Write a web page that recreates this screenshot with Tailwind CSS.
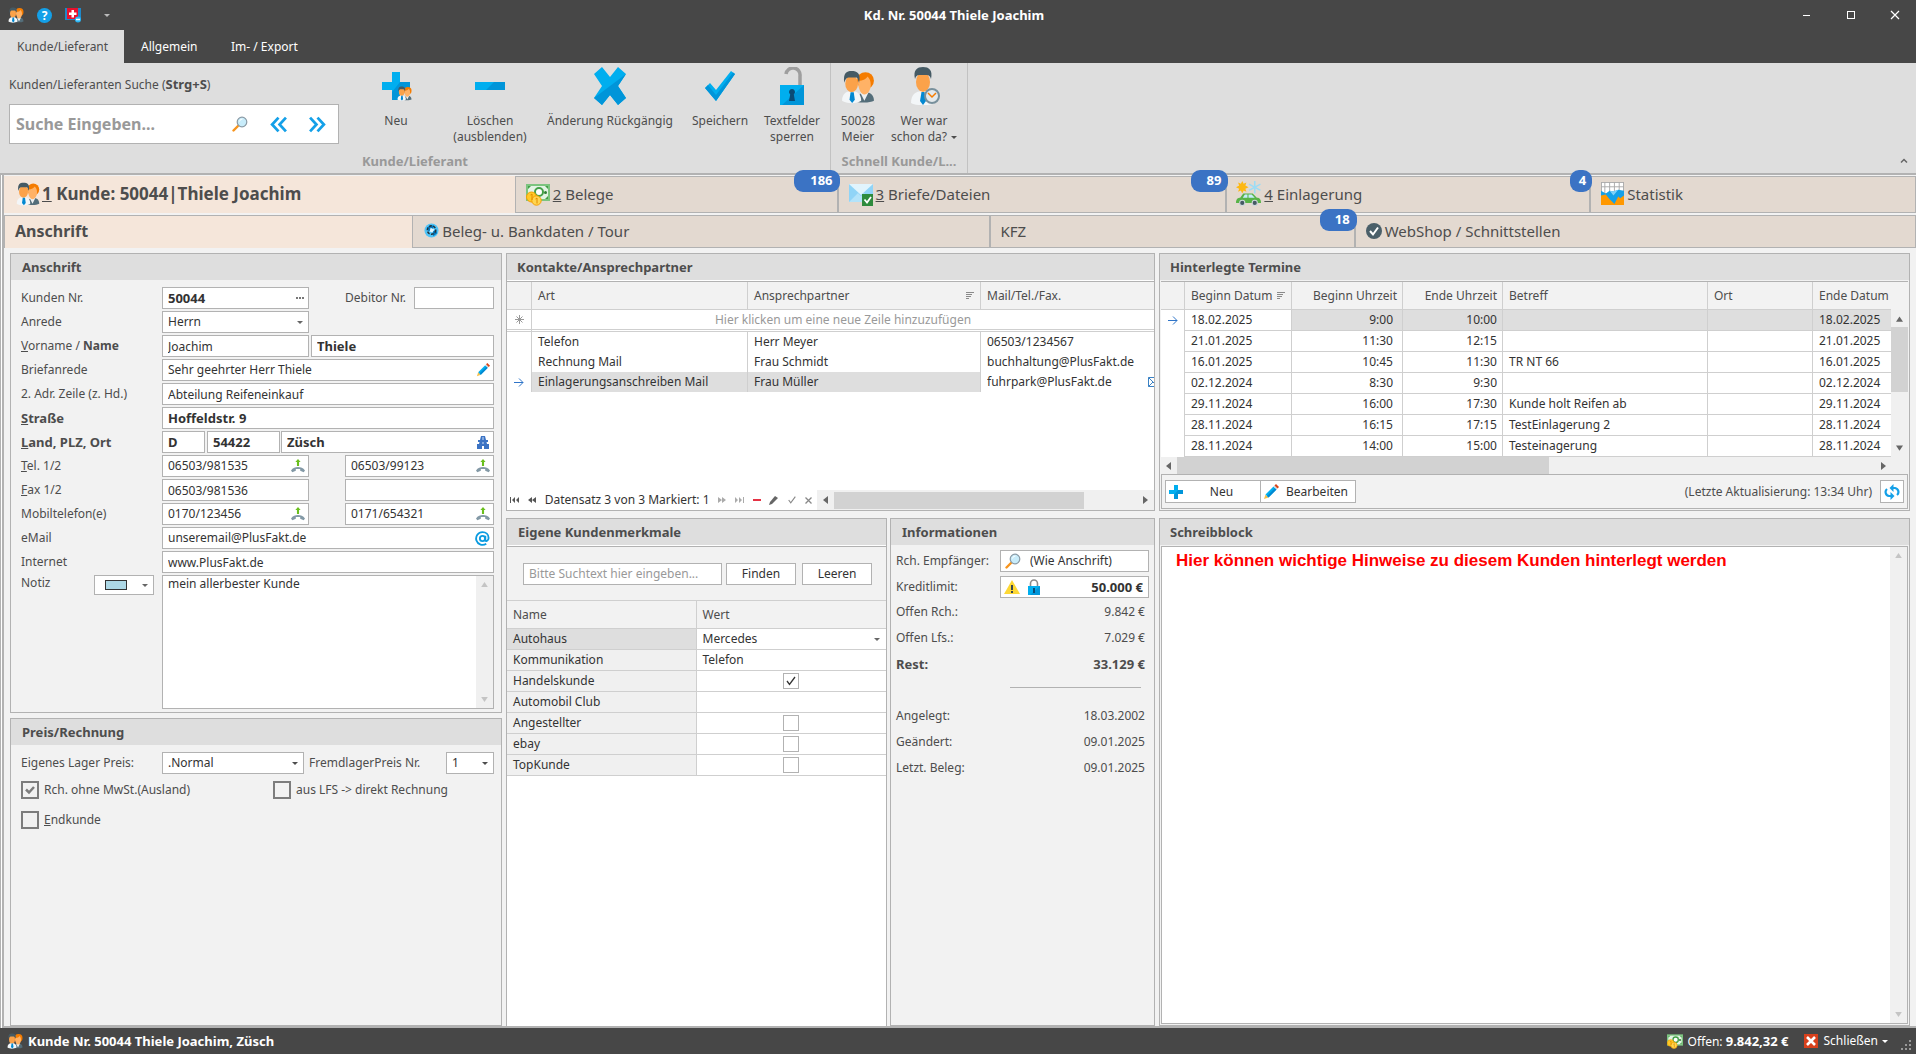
<!doctype html>
<html lang="de">
<head>
    <meta charset="UTF-8">
    <meta name="viewport" content="width=device-width, initial-scale=1.0">
    <title>Kd. Nr. 50044 Thiele Joachim</title>
    <script src="https://cdn.jsdelivr.net/npm/@tailwindcss/browser@4"></script>
</head>
<body class="flex flex-col h-screen overflow-hidden bg-[#f2f2f2] font-['Noto_Sans',sans-serif] text-[12px] leading-[16px] text-[#4d4d4d]">

<!-- shared icons -->
<svg class="hidden">
    <symbol id="i-people" viewBox="0 0 32 32">
        <path d="M15 30c0-5 3-9 8-9s8 3 8 8c-3 2-12 2-16 1z" fill="#546e7a"/>
        <path d="M18 21l4 8 4-8z" fill="#eceff1"/>
        <ellipse cx="23" cy="10" rx="8" ry="8" fill="#f57c00"/>
        <path d="M16 10c5 0 8-2 9-4 2 2 3 4 3 8 0 5-3 9-6 9s-6-5-6-13z" fill="#ffb266"/>
        <path d="M1 29c0-6 3-9 9-9s9 3 9 9c-4 3-14 3-18 0z" fill="#f3f6f8"/>
        <ellipse cx="10" cy="13" rx="6" ry="8" fill="#fba24a"/>
        <path d="M3 12C2 3 5 1 10 1s9 2 7 11c-1-3-1-5-3-5H7c-2 0-3 2-4 5z" fill="#455a64"/>
        <path d="M9 21h3l1 7-2.500 3L8 28z" fill="#0288d1"/>
    </symbol>
    <symbol id="i-plus" viewBox="0 0 28 28">
        <path d="M10 0h8v10h10v8H18v10h-8V18H0v-8h10z" fill="#00aeef"/>
        <path d="M18 10h10v8H18v10h-8v-8z" fill="#0095d9"/>
    </symbol>
    <symbol id="i-lens" viewBox="0 0 16 16">
        <path d="M1.500 14.500l5-5" stroke="#f7941d" stroke-width="2.400" stroke-linecap="round"/>
        <circle cx="10" cy="6" r="4.800" fill="#c8ecfa" stroke="#8a9aa5" stroke-width="1.200"/>
        <path d="M7.500 5.500a3 3 0 0 1 3-2.500" stroke="#fff" fill="none"/>
    </symbol>
    <symbol id="i-pen" viewBox="0 0 16 16">
        <path d="M1 15l1.500-4.500 3 3z" fill="#f5c04a"/>
        <path d="M2.500 10.500L10.500 2.500l3 3-8 8z" fill="#00aeef"/>
        <path d="M4 12l8-8 1.500 1.500-8 8z" fill="#0288d1"/>
        <path d="M10.500 2.500l1-1 3 3-1 1z" fill="#cfd8dc"/>
        <path d="M11.500 1.500L13 0l3 3-1.500 1.500z" fill="#d84315"/>
    </symbol>
    <symbol id="i-phone" viewBox="0 0 16 16">
        <path d="M8 0l3 3.500H9.200V8H6.800V3.500H5z" fill="#6abf1e"/>
        <path d="M0 13c4-5 12-5 16 0l-1.500 2-4-1.500V11.500h-5v2L1.500 15z" fill="#8399a6"/>
    </symbol>
    <symbol id="i-money" viewBox="0 0 24 24">
        <rect x="0" y="2" width="24" height="17" fill="#7cc47f"/>
        <rect x="2" y="4" width="20" height="13" fill="#e3f3e4"/>
        <path d="M2 4h3l-3 3zM22 4h-3l3 3zM22 17h-3l3-3z" fill="#43a047"/>
        <circle cx="13" cy="10" r="4" fill="#fff" stroke="#43a047" stroke-width="2"/>
        <circle cx="19.500" cy="10.500" r="1.500" fill="#2e7d32"/>
        <circle cx="5.500" cy="15" r="5" fill="#ffca28" stroke="#f59f00"/>
        <circle cx="10.500" cy="18.500" r="4.700" fill="#ffd54f" stroke="#f59f00"/>
        <path d="M4.500 13l1.500-1v6M9.500 17l1.500-1v5.500" stroke="#e08a00" fill="none"/>
    </symbol>
    <symbol id="i-caret" viewBox="0 0 6 3"><path d="M0 0h6L3 3z" fill="currentColor"/></symbol>
    <symbol id="i-up" viewBox="0 0 8 6"><path d="M4 0l4 6H0z" fill="currentColor"/></symbol>
    <symbol id="i-down" viewBox="0 0 8 6"><path d="M4 6l4-6H0z" fill="currentColor"/></symbol>
    <symbol id="i-left" viewBox="0 0 5 8"><path d="M5 0v8L0 4z" fill="currentColor"/></symbol>
    <symbol id="i-right" viewBox="0 0 5 8"><path d="M0 0v8l5-4z" fill="currentColor"/></symbol>
    <symbol id="i-row" viewBox="0 0 10 9"><path d="M0 4.500h9M5 .5l4 4-4 4" stroke="#2f74c8" fill="none"/></symbol>
    <symbol id="i-sort" viewBox="0 0 9 8"><path d="M1 .5h8M1 2.500h6M1 4.500h5M1 6.500h3" stroke="#8a8a8a" fill="none"/></symbol>
    <symbol id="i-check" viewBox="0 0 12 12"><path d="M2 6l2.500 3.500L10 2" stroke="currentColor" stroke-width="1.300" fill="none"/></symbol>
</svg>

<header class="shrink-0 bg-[#474747] text-white">
    <div class="flex items-center h-[30px]">
        <div class="flex flex-1 items-center gap-[13px] pl-2">
            <svg class="size-4"><use href="#i-people"/></svg>
            <button type="button" aria-label="Hilfe" class="size-[15px] rounded-full bg-[#14a0e8] text-[12px] leading-[15px] font-bold">?</button>
            <svg class="size-4" viewBox="0 0 16 16"><path d="M0 1h16v12H0z" fill="#1e88c8"/><path d="M2 1h11v11H2z" fill="#e8112d"/><path d="M6.500 3h2.500v2.500h2.500V8H9v2.500H6.500V8H4V5.500h2.500z" fill="#fff"/><circle cx="13" cy="12.500" r="3" fill="#29b6f6"/><path d="M11 12.500h4" stroke="#fff" stroke-width="1.500"/></svg>
            <svg class="ml-[10px] w-[6px] h-[3px] text-[#bbb]"><use href="#i-caret"/></svg>
        </div>
        <h1 class="font-bold text-[13px]">Kd. Nr. 50044 Thiele Joachim</h1>
        <div class="flex flex-1 justify-end gap-[34px] pr-4">
            <button type="button" aria-label="Minimieren"><svg class="size-[10px]" viewBox="0 0 10 10"><path d="M1 5.500h7" stroke="#fff" fill="none"/></svg></button>
            <button type="button" aria-label="Maximieren"><svg class="size-[10px]" viewBox="0 0 10 10"><rect x="1.500" y="1.500" width="7" height="7" stroke="#fff" fill="none"/></svg></button>
            <button type="button" aria-label="Schließen"><svg class="size-[10px]" viewBox="0 0 10 10"><path d="M1 1l8 8M9 1L1 9" stroke="#fff" stroke-width="1.200" fill="none"/></svg></button>
        </div>
    </div>
    <nav class="flex h-[33px] items-stretch">
        <a href="#" class="flex items-center bg-[#dedede] pl-[17px] w-[124px] text-[#4d4d4d]">Kunde/Lieferant</a>
        <a href="#" class="flex items-center pl-[17px] w-[90px]">Allgemein</a>
        <a href="#" class="flex items-center pl-[17px]">Im- / Export</a>
    </nav>
</header>

<section class="flex shrink-0 h-[112px] bg-[#dedede] border-b-2 border-[#b2b2b2]">
    <div class="relative flex w-[831px] border-r border-[#c2c2c2]">
        <div class="w-[346px] pl-[9px] pr-[7px] pt-[13px]">
            <label for="suche">Kunden/Lieferanten Suche (<b class="text-[13px]">Strg+S</b>)</label>
            <div class="flex items-center mt-[11px] h-[40px] border border-[#b2b2b2] bg-white pl-[6px] pr-3 gap-[22px]">
                <input id="suche" type="text" placeholder="Suche Eingeben..." class="min-w-0 flex-1 text-[16px] font-bold outline-none placeholder:text-[#999]">
                <svg class="size-4 shrink-0"><use href="#i-lens"/></svg>
                <button type="button" aria-label="Zurück"><svg class="size-[17px]" viewBox="0 0 16 16"><path d="M8 1.500L2 8l6 6.500M15 1.500L9 8l6 6.500" stroke="#14a0e8" stroke-width="2.600" fill="none"/></svg></button>
                <button type="button" aria-label="Vor"><svg class="size-[17px]" viewBox="0 0 16 16"><path d="M1 1.500L7 8l-6 6.500M8 1.500L14 8l-6 6.500" stroke="#14a0e8" stroke-width="2.600" fill="none"/></svg></button>
            </div>
        </div>
        <button type="button" class="flex flex-col items-center w-[100px] pt-[7px]">
            <svg class="size-8 mb-[11px]" viewBox="0 0 32 32"><use href="#i-plus" x="2" y="2" width="28" height="28"/><use href="#i-people" x="17" y="16" width="15" height="15"/></svg>
            Neu
        </button>
        <button type="button" class="flex flex-col items-center w-[88px] pt-[7px]">
            <svg class="size-8 mb-[11px]" viewBox="0 0 32 32"><path d="M1 12h30v8H1z" fill="#00aeef"/><path d="M20 12h11v8H12z" fill="#0095d9"/></svg>
            Löschen<br>(ausblenden)
        </button>
        <button type="button" class="flex flex-col items-center w-[152px] pt-[7px]">
            <svg class="size-[38px] -mt-[3px] mb-2" viewBox="0 0 38 38"><path d="M3 7l8-7 8 10 8-10 8 7-8 12 8 12-8 7-8-10-8 10-8-7 8-12z" fill="#00aeef"/><path d="M35 7l-8 12 8 12-8 7-8-10-8 10-8-7z" fill="#0095d9"/></svg>
            Änderung Rückgängig
        </button>
        <button type="button" class="flex flex-col items-center w-[68px] pt-[7px]">
            <svg class="size-8 mb-[11px]" viewBox="0 0 32 32"><path d="M1 18l5-5 6 7L27 1l4 3-19 27z" fill="#00aeef"/><path d="M31 4L12 31 1 18l3-3 8 10L29 2.500z" fill="#0095d9"/></svg>
            Speichern
        </button>
        <button type="button" class="flex flex-col items-center w-[76px] pt-[7px]">
            <svg class="size-[38px] -mt-[3px] mb-2" viewBox="0 0 38 38"><path d="M13 7a6.500 6.500 0 0 1 14 2v10" stroke="#9e9e9e" stroke-width="3.500" fill="none"/><path d="M7 18h24v20H7z" fill="#00aeef"/><path d="M31 18v20H9z" fill="#0095d9"/><path d="M19 22a3 3 0 0 1 1.800 5.400L22 34h-6l1.200-6.600A3 3 0 0 1 19 22z" fill="#0b4a75"/></svg>
            Textfelder<br>sperren
        </button>
        <p class="absolute inset-x-0 bottom-1 text-center text-[13px] font-bold text-[#999]">Kunde/Lieferant</p>
    </div>
    <div class="relative flex w-[137px] border-r border-[#c2c2c2]">
        <button type="button" class="flex flex-col items-center w-[54px] pt-[7px]">
            <svg class="size-[34px] mb-[9px]"><use href="#i-people"/></svg>
            50028<br>Meier
        </button>
        <button type="button" class="flex flex-col items-center w-[78px] pt-[7px]">
            <svg class="size-[38px] -mt-[3px] mb-2" viewBox="0 0 38 38"><path d="M6 36c0-8 4-12 12-12s12 4 12 12c-5 3-19 3-24 0z" fill="#f3f6f8"/><ellipse cx="18" cy="15" rx="7" ry="10" fill="#fba24a"/><path d="M10 12C8 3 12 0 18 0s10 3 8 12c-1-3-2-4-4-4h-8c-2 0-3 1-4 4z" fill="#455a64"/><path d="M16.500 25h3l1.500 9-3 4-3-4z" fill="#0288d1"/><circle cx="27" cy="29" r="7" fill="#e3e9ec" stroke="#78909c" stroke-width="2"/><path d="M23 26l4 4 4-4" stroke="#f57c00" stroke-width="1.500" fill="none"/></svg>
            Wer war<span class="flex items-center gap-1">schon da? <svg class="w-[6px] h-[3px]"><use href="#i-caret"/></svg></span>
        </button>
        <p class="absolute inset-x-0 bottom-1 text-center text-[13px] font-bold text-[#999]">Schnell Kunde/L...</p>
    </div>
    <button type="button" aria-label="Menüband minimieren" class="ml-auto mt-auto mb-2 mr-2"><svg class="w-2 h-[7px]" viewBox="0 0 8 7"><path d="M1 4.500L4 1.500l3 3" stroke="#666" stroke-width="1.500" fill="none"/></svg></button>
</section>

<main class="flex flex-1 min-h-0 border-l border-[#b2b2b2] bg-white pl-px">
<div class="flex flex-col flex-1 min-w-0 border-l-2 border-[#b2b2b2] bg-[#f2f2f2] pt-px">

    <nav class="grid shrink-0 grid-cols-[511fr_323fr_389fr_364fr_326fr] h-[37px] text-[15px]">
        <a href="#" class="flex items-center gap-[2px] bg-[#f5e6da] pl-3 pb-[2px] text-[17px] font-bold"><svg class="size-6"><use href="#i-people"/></svg><span><u>1</u> Kunde: 50044|Thiele Joachim</span></a>
        <a href="#" class="relative flex items-center gap-[3px] border border-[#b2b2b2] bg-[#e3d9d0] pl-[10px] pb-[2px]">
            <svg class="size-6"><use href="#i-money"/></svg><span><u>2</u> Belege</span>
            <span class="absolute z-10 -top-[7px] -right-[3px] w-[46px] h-[22px] rounded-[9px] bg-[#3b73c4] pr-[7px] text-right text-[13px] leading-[21px] font-bold text-white">186</span>
        </a>
        <a href="#" class="relative flex items-center gap-[3px] border border-[#b2b2b2] bg-[#e3d9d0] pl-[10px] pb-[2px]">
            <svg class="size-6" viewBox="0 0 24 24"><path d="M0 2h24v18H0z" fill="#90d4f7"/><path d="M0 2l12 11L24 2z" fill="#e1f4fd"/><path d="M0 20l9-9 3 3 3-3 9 9z" fill="#b3e3fa"/><rect x="13" y="12" width="11" height="12" fill="#2e8b3d"/><path d="M15.500 17.500l2.500 3 4-5.500" stroke="#fff" stroke-width="1.800" fill="none"/></svg><span><u>3</u> Briefe/Dateien</span>
            <span class="absolute z-10 -top-[7px] -right-[3px] w-[37px] h-[22px] rounded-[9px] bg-[#3b73c4] pr-[7px] text-right text-[13px] leading-[21px] font-bold text-white">89</span>
        </a>
        <a href="#" class="relative flex items-center gap-[3px] border border-[#b2b2b2] bg-[#e3d9d0] pl-[9px] pb-[2px]">
            <svg class="size-[25px]" viewBox="0 0 24 24"><path d="M6 0l1.300 2.600L10 1.500 9 4.300 12 6 9 7.400l1 2.800-2.700-1L6 12 4.700 9.200 2 10.200l1-2.800L0 6l3-1.700L2 1.500l2.700 1.100z" fill="#fdb813"/><path d="M18 0v12M12.500 3l11 6M23.500 3l-11 6" stroke="#9ddcf5" stroke-width="1.500"/><path d="M0 21c0-4 2-5 4-5l3-4h9l4 4c3 0 4 2 4 5z" fill="#58b347"/><path d="M6.500 16l2-3H11v3zM12 13h3l3 3h-6z" fill="#c5ecfb"/><circle cx="6" cy="21" r="2.500" fill="#455a64" stroke="#cfd8dc"/><circle cx="18" cy="21" r="2.500" fill="#455a64" stroke="#cfd8dc"/></svg><span><u>4</u> Einlagerung</span>
            <span class="absolute z-10 -top-[7px] -right-[3px] w-[22px] h-[22px] rounded-[9px] bg-[#3b73c4] pr-[6px] text-right text-[13px] leading-[21px] font-bold text-white">4</span>
        </a>
        <a href="#" class="flex items-center gap-[3px] border border-[#b2b2b2] bg-[#e3d9d0] pl-[10px] pb-[2px]">
            <svg class="size-[23px]" viewBox="0 0 24 24"><path d="M0 0h24v13H0z" fill="#fff"/><path d="M0 .5h24M0 5h24M4 0v12M9 0v12M14 0v12M19 0v12M23.500 0v12M.5 0v12" stroke="#aaa"/><path d="M0 12h24v12H0z" fill="#ff9800"/><path d="M0 9l5 3 4-3 4 1 5-2 6 1v5l-4 3-2-2-4 8-5-5-4-5-5 1z" fill="#14a0e8"/><path d="M9 9l4 5 5-6-5 2z" fill="#7fd0f7"/></svg><span>Statistik</span>
        </a>
    </nav>

    <nav class="grid shrink-0 grid-cols-[408fr_577fr_365fr_561fr] mt-[2px] h-[33px] text-[15px]">
        <a href="#" class="flex items-center bg-[#f5e6da] border-t border-l border-[#b2b2b2] pl-[10px] pb-[2px] text-[16px] font-bold">Anschrift</a>
        <a href="#" class="flex items-center gap-[3px] border border-[#b2b2b2] bg-[#e3d9d0] pl-[11px] pb-[2px]">
            <svg class="size-[15px]" viewBox="0 0 16 16"><circle cx="8" cy="8" r="7.500" fill="#4fc3f7"/><path d="M3 5l4-3 4 1-2 4-4 2zM9 9l4-2 1 4-4 3z" fill="#0277bd"/><circle cx="8" cy="7.500" r="4.500" stroke="#263238" stroke-width="1.500" fill="none" stroke-dasharray="3 1.500"/><path d="M7 5l4 2-2 3-3-1z" fill="#e1f5fe"/></svg>
            Beleg- u. Bankdaten / Tour
        </a>
        <a href="#" class="relative flex items-center border border-[#b2b2b2] bg-[#e3d9d0] pl-[10px] pb-[2px]">KFZ
            <span class="absolute z-10 -top-[7px] -right-[3px] w-[37px] h-[22px] rounded-[9px] bg-[#3b73c4] pr-[7px] text-right text-[13px] leading-[21px] font-bold text-white">18</span>
        </a>
        <a href="#" class="flex items-center gap-[3px] border border-[#b2b2b2] bg-[#e3d9d0] pl-[10px] pb-[2px]">
            <svg class="size-4" viewBox="0 0 16 16"><circle cx="8" cy="8" r="8" fill="#4a5f69"/><path d="M4 8l3 3.500L12 4.500" stroke="#fff" stroke-width="2" fill="none"/></svg>
            WebShop / Schnittstellen
        </a>
    </nav>

    <div class="grid flex-1 min-h-0 grid-cols-[492px_649px_1fr] gap-x-1 pl-[6px] pr-[6px] pt-[5px] border-b-2 border-[#b2b2b2]">

        <!-- left column -->
        <div class="flex flex-col gap-[5px] min-h-0">
            <section class="border border-[#b2b2b2]">
                <h2 class="flex items-center h-[26px] bg-[#dedede] pl-[11px] text-[13px] font-bold">Anschrift</h2>
                <form class="flex flex-col gap-[2px] pl-[10px] pr-[7px] pt-[7px] pb-[3px] text-[#333]">
                    <div class="flex h-[22px] items-center">
                        <label for="kdnr" class="w-[141px] text-[#4d4d4d]">Kunden Nr.</label>
                        <div class="flex items-center h-full w-[147px] border border-[#b2b2b2] bg-white pl-[5px] pr-1">
                            <input id="kdnr" value="50044" class="min-w-0 flex-1 text-[13px] font-bold outline-none">
                            <svg class="w-[8px] h-[2px]" viewBox="0 0 8 2"><path d="M0 0h2v2H0zM3 0h2v2H3zM6 0h2v2H6z" fill="#777"/></svg>
                        </div>
                        <label for="debnr" class="ml-[36px] text-[#4d4d4d]">Debitor Nr.</label>
                        <input id="debnr" class="ml-auto h-full w-[80px] border border-[#b2b2b2] bg-white px-[5px]">
                    </div>
                    <div class="flex h-[22px] items-center">
                        <label for="anrede" class="w-[141px] text-[#4d4d4d]">Anrede</label>
                        <div class="relative h-full w-[147px]">
                            <select id="anrede" class="size-full appearance-none border border-[#b2b2b2] bg-white pl-[5px]"><option>Herrn</option></select>
                            <svg class="absolute right-[6px] top-[10px] w-[6px] h-[3px] text-[#666]"><use href="#i-caret"/></svg>
                        </div>
                    </div>
                    <div class="flex h-[22px] items-center">
                        <label for="vorname" class="w-[141px] text-[#4d4d4d]"><u>V</u>orname / <b>Name</b></label>
                        <input id="vorname" value="Joachim" class="h-full w-[147px] border border-[#b2b2b2] bg-white px-[5px]">
                        <input aria-label="Name" value="Thiele" class="ml-[2px] h-full min-w-0 flex-1 border border-[#b2b2b2] bg-white px-[5px] text-[13px] font-bold">
                    </div>
                    <div class="flex h-[22px] items-center">
                        <label for="brief" class="w-[141px] text-[#4d4d4d]">Briefanrede</label>
                        <div class="flex flex-1 items-center h-full border border-[#b2b2b2] bg-white pl-[5px] pr-[3px]">
                            <input id="brief" value="Sehr geehrter Herr Thiele" class="min-w-0 flex-1 outline-none">
                            <svg class="size-[14px]"><use href="#i-pen"/></svg>
                        </div>
                    </div>
                    <div class="flex h-[22px] items-center">
                        <label for="adr2" class="w-[141px] text-[#4d4d4d]">2. Adr. Zeile (z. Hd.)</label>
                        <input id="adr2" value="Abteilung Reifeneinkauf" class="h-full min-w-0 flex-1 border border-[#b2b2b2] bg-white px-[5px]">
                    </div>
                    <div class="flex h-[22px] items-center">
                        <label for="str" class="w-[141px] text-[13px] font-bold text-[#4d4d4d]"><u>S</u>traße</label>
                        <input id="str" value="Hoffeldstr. 9" class="h-full min-w-0 flex-1 border border-[#b2b2b2] bg-white px-[5px] text-[13px] font-bold">
                    </div>
                    <div class="flex h-[22px] items-center">
                        <label for="land" class="w-[141px] text-[13px] font-bold text-[#4d4d4d]"><u>L</u>and, PLZ, Ort</label>
                        <input id="land" value="D" class="h-full w-[43px] border border-[#b2b2b2] bg-white px-[5px] text-[13px] font-bold">
                        <input aria-label="PLZ" value="54422" class="ml-[2px] h-full w-[73px] border border-[#b2b2b2] bg-white px-[5px] text-[13px] font-bold">
                        <div class="flex flex-1 items-center ml-px h-full border border-[#b2b2b2] bg-white pl-[5px] pr-1">
                            <input aria-label="Ort" value="Züsch" class="min-w-0 flex-1 text-[13px] font-bold outline-none">
                            <svg class="w-3 h-[13px]" viewBox="0 0 12 13"><path d="M4 0h4l1 4h2v2H9.500l.5 2h2l0 5H7v-3H5v3H0V8h2l.5-2H1V4h2z" fill="#3b73c4"/><path d="M6 1v3M6 6v2" stroke="#cfe0f7"/></svg>
                        </div>
                    </div>
                    <div class="flex h-[22px] items-center">
                        <label for="tel1" class="w-[141px] text-[#4d4d4d]"><u>T</u>el. 1/2</label>
                        <div class="flex items-center h-full w-[147px] border border-[#b2b2b2] bg-white pl-[5px] pr-[3px]">
                            <input id="tel1" value="06503/981535" class="min-w-0 flex-1 outline-none">
                            <svg class="size-[14px]"><use href="#i-phone"/></svg>
                        </div>
                        <div class="flex items-center ml-auto h-full w-[149px] border border-[#b2b2b2] bg-white pl-[5px] pr-[3px]">
                            <input aria-label="Telefon 2" value="06503/99123" class="min-w-0 flex-1 outline-none">
                            <svg class="size-[14px]"><use href="#i-phone"/></svg>
                        </div>
                    </div>
                    <div class="flex h-[22px] items-center">
                        <label for="fax1" class="w-[141px] text-[#4d4d4d]"><u>F</u>ax 1/2</label>
                        <input id="fax1" value="06503/981536" class="h-full w-[147px] border border-[#b2b2b2] bg-white px-[5px]">
                        <input aria-label="Fax 2" class="ml-auto h-full w-[149px] border border-[#b2b2b2] bg-white px-[5px]">
                    </div>
                    <div class="flex h-[22px] items-center">
                        <label for="mob1" class="w-[141px] text-[#4d4d4d]">Mobiltelefon(e)</label>
                        <div class="flex items-center h-full w-[147px] border border-[#b2b2b2] bg-white pl-[5px] pr-[3px]">
                            <input id="mob1" value="0170/123456" class="min-w-0 flex-1 outline-none">
                            <svg class="size-[14px]"><use href="#i-phone"/></svg>
                        </div>
                        <div class="flex items-center ml-auto h-full w-[149px] border border-[#b2b2b2] bg-white pl-[5px] pr-[3px]">
                            <input aria-label="Mobiltelefon 2" value="0171/654321" class="min-w-0 flex-1 outline-none">
                            <svg class="size-[14px]"><use href="#i-phone"/></svg>
                        </div>
                    </div>
                    <div class="flex h-[22px] items-center">
                        <label for="mail" class="w-[141px] text-[#4d4d4d]">eMail</label>
                        <div class="flex flex-1 items-center h-full border border-[#b2b2b2] bg-white pl-[5px] pr-[3px]">
                            <input id="mail" value="unseremail@PlusFakt.de" class="min-w-0 flex-1 outline-none">
                            <svg class="size-[15px]" viewBox="0 0 16 16"><circle cx="8" cy="8" r="2.800" stroke="#0b9be0" stroke-width="2" fill="none"/><path d="M11 5v4.500c0 2 3.500 1.500 3.500-2C14.500 3.500 11.500 1.200 8 1.200A6.800 6.800 0 1 0 12 13.500" stroke="#0b9be0" stroke-width="2" fill="none"/></svg>
                        </div>
                    </div>
                    <div class="flex h-[22px] items-center">
                        <label for="www" class="w-[141px] text-[#4d4d4d]">Internet</label>
                        <input id="www" value="www.PlusFakt.de" class="h-full min-w-0 flex-1 border border-[#b2b2b2] bg-white px-[5px]">
                    </div>
                    <div class="flex">
                        <label for="notiz" class="w-[73px] text-[#4d4d4d]">Notiz</label>
                        <button type="button" aria-label="Farbe" class="flex items-center justify-between w-[60px] h-5 mr-2 border border-[#b2b2b2] bg-white pl-[10px] pr-[5px]">
                            <span class="w-[22px] h-[10px] border border-[#333] bg-[#add8e6]"></span>
                            <svg class="w-[6px] h-[3px] text-[#666]"><use href="#i-caret"/></svg>
                        </button>
                        <div class="flex flex-1 h-[134px] border border-[#b2b2b2] bg-white">
                            <textarea id="notiz" class="min-w-0 flex-1 resize-none pl-[5px] outline-none">mein allerbester Kunde</textarea>
                            <div class="flex flex-col items-center justify-between w-[17px] bg-[#f0f0f0] py-[6px] text-[#c4c4c4]"><svg class="w-[7px] h-[5px]"><use href="#i-up"/></svg><svg class="w-[7px] h-[5px]"><use href="#i-down"/></svg></div>
                        </div>
                    </div>
                </form>
            </section>

            <section class="flex-1 border border-[#b2b2b2]">
                <h2 class="flex items-center h-[26px] bg-[#dedede] pl-[11px] text-[13px] font-bold">Preis/Rechnung</h2>
                <div class="pl-[10px] pr-[7px] pt-[7px]">
                    <div class="flex h-[22px] items-center">
                        <label for="preis" class="w-[141px]">Eigenes Lager Preis:</label>
                        <div class="relative h-full w-[142px]">
                            <select id="preis" class="size-full appearance-none border border-[#b2b2b2] bg-white pl-[5px] text-[#333]"><option>.Normal</option></select>
                            <svg class="absolute right-[6px] top-[10px] w-[6px] h-[3px]"><use href="#i-caret"/></svg>
                        </div>
                        <label for="fremd" class="ml-[5px]">FremdlagerPreis Nr.</label>
                        <div class="relative ml-auto h-full w-[48px]">
                            <select id="fremd" class="size-full appearance-none border border-[#b2b2b2] bg-white pl-[5px] text-[#333]"><option>1</option></select>
                            <svg class="absolute right-[6px] top-[10px] w-[6px] h-[3px]"><use href="#i-caret"/></svg>
                        </div>
                    </div>
                    <div class="grid grid-cols-[252px_1fr] gap-y-3 mt-[7px]">
                        <label class="relative flex items-center gap-[5px]"><input type="checkbox" checked class="size-[18px] appearance-none border-2 border-[#7d7d7d]"><svg class="absolute left-1 size-[10px]" viewBox="0 0 10 10"><path d="M1 4.500l3 3L9 2" stroke="#7d7d7d" stroke-width="2.500" fill="none"/></svg>Rch. ohne MwSt.(Ausland)</label>
                        <label class="flex items-center gap-[5px]"><input type="checkbox" class="size-[18px] appearance-none border-2 border-[#7d7d7d]">aus LFS -&gt; direkt Rechnung</label>
                        <label class="flex items-center gap-[5px]"><input type="checkbox" class="size-[18px] appearance-none border-2 border-[#7d7d7d]"><span><u>E</u>ndkunde</span></label>
                    </div>
                </div>
            </section>
        </div>

        <!-- middle column -->
        <div class="flex flex-col gap-[7px] min-h-0">
            <section class="flex flex-col h-[258px] border border-[#b2b2b2] bg-white overflow-hidden">
                <h2 class="flex shrink-0 items-center h-[26px] bg-[#dedede] pl-[10px] text-[13px] font-bold">Kontakte/Ansprechpartner</h2>
                <table class="w-full mt-px table-fixed border-separate border-spacing-0 border-t border-[#b2b2b2] text-left text-[#333]">
                    <colgroup><col class="w-[25px]"><col class="w-[216px]"><col class="w-[233px]"><col></colgroup>
                    <thead class="bg-[#f2f2f2] text-[#4d4d4d]">
                        <tr class="h-[28px]">
                            <th class="border-r border-b border-[#cfcfcf]"></th>
                            <th class="border-r border-b border-[#cfcfcf] pl-[6px] font-normal">Art</th>
                            <th class="border-r border-b border-[#cfcfcf] px-[6px] font-normal"><span class="flex items-center justify-between">Ansprechpartner <svg class="w-[9px] h-2"><use href="#i-sort"/></svg></span></th>
                            <th class="border-b border-[#cfcfcf] pl-[6px] font-normal">Mail/Tel./Fax.</th>
                        </tr>
                        <tr class="h-[22px] bg-white text-[#999]">
                            <th class="border-r border-b-3 border-double border-[#cfcfcf]"><svg class="mx-auto size-[9px]" viewBox="0 0 9 9"><path d="M4.500 0v9M0 4.500h9M1.500 1.500l6 6M7.500 1.500l-6 6" stroke="#999"/></svg></th>
                            <th colspan="3" class="border-b-3 border-double border-[#cfcfcf] text-center font-normal">Hier klicken um eine neue Zeile hinzuzufügen</th>
                        </tr>
                    </thead>
                    <tbody id="kontakte"></tbody>
                </table>
                <div class="flex shrink-0 items-center mt-auto h-[20px] pl-[3px]">
                    <div class="flex flex-1 items-center justify-between pr-[5px] text-[#555]">
                        <svg class="w-[10px] h-[6px]" viewBox="0 0 10 6"><path d="M0 0h1v6H0zM5 0v6L2 3zM9 0v6L6 3z" fill="#555"/></svg>
                        <svg class="w-[8px] h-[6px]" viewBox="0 0 8 6"><path d="M4 0v6L0 3zM8 0v6L4 3z" fill="#555"/></svg>
                        <span class="text-[#333]">Datensatz 3 von 3 Markiert: 1</span>
                        <svg class="w-[8px] h-[6px]" viewBox="0 0 8 6"><path d="M0 0v6l4-3zM4 0v6l4-3z" fill="#aaa"/></svg>
                        <svg class="w-[10px] h-[6px]" viewBox="0 0 10 6"><path d="M1 0v6l3-3zM5 0v6l3-3zM9 0h1v6H9z" fill="#aaa"/></svg>
                        <svg class="w-2 h-[2px]" viewBox="0 0 8 2"><path d="M0 0h8v2H0z" fill="#e53244"/></svg>
                        <svg class="size-[9px]" viewBox="0 0 9 9"><path d="M0 9l1-3 5-6 3 2-6 6z" fill="#666"/></svg>
                        <svg class="size-[10px] text-[#888]"><use href="#i-check"/></svg>
                        <svg class="size-[7px]" viewBox="0 0 7 7"><path d="M.5.5l6 6M6.500.5l-6 6" stroke="#888" stroke-width="1.300"/></svg>
                    </div>
                    <div class="flex items-center w-[337px] h-full bg-[#f0f0f0] px-[6px] text-[#666]">
                        <svg class="w-[5px] h-2"><use href="#i-left"/></svg>
                        <div class="ml-[6px] mr-auto w-[250px] h-[17px] bg-[#d2d2d2]"></div>
                        <svg class="w-[5px] h-2"><use href="#i-right"/></svg>
                    </div>
                </div>
            </section>

            <div class="grid flex-1 min-h-0 grid-cols-[381px_1fr] gap-[3px]">
                <section class="border border-b-0 border-[#b2b2b2] bg-white">
                    <h2 class="flex items-center h-[26px] bg-[#dedede] pl-[11px] text-[13px] font-bold">Eigene Kundenmerkmale</h2>
                    <div class="flex h-[54px] items-center mt-px border-t border-[#b2b2b2] bg-[#f2f2f2] pl-4 pr-[14px] text-[#333]">
                        <input type="text" aria-label="Merkmal suchen" placeholder="Bitte Suchtext hier eingeben..." class="h-[22px] min-w-0 flex-1 border border-[#b2b2b2] bg-white px-[5px] placeholder:text-[#999]">
                        <button type="button" class="ml-1 h-[22px] w-[70px] border border-[#b2b2b2] bg-white">Finden</button>
                        <button type="button" class="ml-[6px] h-[22px] w-[70px] border border-[#b2b2b2] bg-white">Leeren</button>
                    </div>
                    <table class="w-full table-fixed border-separate border-spacing-0 text-left text-[#333]">
                        <thead class="bg-[#f2f2f2] text-[#4d4d4d]">
                            <tr class="h-[29px]">
                                <th class="border-y border-r border-[#cfcfcf] pl-[6px] font-normal">Name</th>
                                <th class="border-y border-[#cfcfcf] pl-[6px] font-normal">Wert</th>
                            </tr>
                        </thead>
                        <tbody id="merkmale"></tbody>
                    </table>
                </section>

                <section class="border border-[#b2b2b2]">
                    <h2 class="flex items-center h-[26px] bg-[#dedede] pl-[11px] text-[13px] font-bold">Informationen</h2>
                    <div class="pl-[5px] pr-[5px] pt-[3px]">
                        <div class="flex h-[26px] items-center justify-between">
                            <label for="rch">Rch. Empfänger:</label>
                            <div class="flex items-center gap-[9px] w-[149px] h-[22px] border border-[#b2b2b2] bg-white pl-1">
                                <svg class="size-4 shrink-0"><use href="#i-lens"/></svg>
                                <input id="rch" value="(Wie Anschrift)" class="min-w-0 flex-1 text-[#333] outline-none">
                            </div>
                        </div>
                        <div class="flex h-[26px] items-center justify-between">
                            <label for="kredit">Kreditlimit:</label>
                            <div class="flex items-center gap-2 w-[149px] h-[22px] border border-[#b2b2b2] bg-white pl-[3px] pr-[5px]">
                                <svg class="size-4 shrink-0" viewBox="0 0 16 16"><path d="M8 1l8 14H0z" fill="#fdd835"/><path d="M7 6h2v5H7zM7 12h2v2H7z" fill="#37474f"/></svg>
                                <svg class="w-3 h-4 shrink-0" viewBox="0 0 12 16"><path d="M2.500 8V4.500a3.500 3.500 0 0 1 7 0V8" stroke="#8a8a8a" stroke-width="1.600" fill="none"/><path d="M0 7h12v9H0z" fill="#00aeef"/><path d="M12 7v9H2z" fill="#0095d9"/><path d="M5 9h2v5H5z" fill="#0b4a75"/></svg>
                                <input id="kredit" value="50.000 €" class="min-w-0 flex-1 text-right text-[13px] font-bold text-[#333] outline-none">
                            </div>
                        </div>
                        <dl class="grid grid-cols-2 auto-rows-[26px] pr-[4px] leading-[24px]">
                            <dt>Offen Rch.:</dt><dd class="text-right">9.842 €</dd>
                            <dt>Offen Lfs.:</dt><dd class="text-right">7.029 €</dd>
                            <dt class="text-[13px] font-bold">Rest:</dt><dd class="text-right text-[13px] font-bold">33.129 €</dd>
                        </dl>
                        <hr class="mt-[9px] mb-4 ml-auto mr-2 w-[131px] border-[#b2b2b2]">
                        <dl class="grid grid-cols-2 auto-rows-[26px] pr-[4px] leading-[24px]">
                            <dt>Angelegt:</dt><dd class="text-right">18.03.2002</dd>
                            <dt>Geändert:</dt><dd class="text-right">09.01.2025</dd>
                            <dt>Letzt. Beleg:</dt><dd class="text-right">09.01.2025</dd>
                        </dl>
                    </div>
                </section>
            </div>
        </div>

        <!-- right column -->
        <div class="flex flex-col gap-[7px] min-w-0 min-h-0">
            <section class="flex flex-col h-[258px] border border-[#b2b2b2]">
                <h2 class="flex shrink-0 items-center h-[26px] bg-[#dedede] pl-[10px] text-[13px] font-bold">Hinterlegte Termine</h2>
                <div class="flex border-t border-[#b2b2b2] mx-px mt-px">
                    <table class="flex-1 table-fixed w-px border-separate border-spacing-0 text-left text-[#333]">
                        <colgroup><col class="w-[24px]"><col class="w-[107px]"><col class="w-[111px]"><col class="w-[100px]"><col class="w-[205px]"><col class="w-[105px]"><col></colgroup>
                        <thead class="text-[#4d4d4d]">
                            <tr class="h-[28px] whitespace-nowrap">
                                <th class="border-r border-b border-[#cfcfcf]"></th>
                                <th class="border-r border-b border-[#cfcfcf] px-[6px] font-normal"><span class="flex items-center justify-between">Beginn Datum <svg class="w-[9px] h-2"><use href="#i-sort"/></svg></span></th>
                                <th class="border-r border-b border-[#cfcfcf] pr-[5px] text-right font-normal">Beginn Uhrzeit</th>
                                <th class="border-r border-b border-[#cfcfcf] pr-[5px] text-right font-normal">Ende Uhrzeit</th>
                                <th class="border-r border-b border-[#cfcfcf] pl-[6px] font-normal">Betreff</th>
                                <th class="border-r border-b border-[#cfcfcf] pl-[6px] font-normal">Ort</th>
                                <th class="border-b border-[#cfcfcf] pl-[6px] font-normal">Ende Datum</th>
                            </tr>
                        </thead>
                        <tbody id="termine"></tbody>
                    </table>
                    <div class="flex flex-col w-[17px] pt-[28px]">
                        <div class="flex flex-1 flex-col items-center bg-[#f0f0f0] py-[6px] text-[#666]">
                            <svg class="w-[7px] h-[6px]"><use href="#i-up"/></svg>
                            <div class="mt-[5px] mb-auto w-full h-[65px] bg-[#d2d2d2]"></div>
                            <svg class="w-[7px] h-[6px]"><use href="#i-down"/></svg>
                        </div>
                    </div>
                </div>
                <div class="flex items-center h-[17px] mx-px bg-[#f0f0f0] pl-[5px] pr-[22px] text-[#666]">
                    <svg class="w-[5px] h-2"><use href="#i-left"/></svg>
                    <div class="ml-[6px] mr-auto w-[372px] h-full bg-[#d2d2d2]"></div>
                    <svg class="w-[5px] h-2"><use href="#i-right"/></svg>
                </div>
                <div class="flex flex-1 items-center mx-px mb-px border border-[#b2b2b2] px-[3px] text-[#333]">
                    <button type="button" class="flex items-center w-[96px] h-[23px] border border-[#b2b2b2] bg-white pl-[3px]"><svg class="size-[14px]"><use href="#i-plus"/></svg><span class="flex-1 text-center">Neu</span></button>
                    <button type="button" class="flex items-center w-[96px] h-[23px] -ml-px border border-[#b2b2b2] bg-white pl-[2px]"><svg class="size-4"><use href="#i-pen"/></svg><span class="flex-1 text-center">Bearbeiten</span></button>
                    <span class="ml-auto mr-2 text-[#4d4d4d]">(Letzte Aktualisierung: 13:34 Uhr)</span>
                    <button type="button" aria-label="Aktualisieren" class="flex items-center justify-center w-6 h-[23px] border border-[#b2b2b2] bg-white"><svg class="size-4" viewBox="0 0 16 16"><path d="M7 12H5a4 4 0 0 1-2-7M9 4h2a4 4 0 0 1 2 7" stroke="#14a0e8" stroke-width="2.200" fill="none"/><path d="M9.500 0v8L5.500 4zM6.500 8v8l4-4z" fill="#14a0e8"/></svg></button>
                </div>
            </section>

            <section class="flex flex-col flex-1 min-h-0 border border-[#b2b2b2] pb-px">
                <h2 class="flex shrink-0 items-center h-[26px] bg-[#dedede] pl-[10px] text-[13px] font-bold"><label for="block">Schreibblock</label></h2>
                <div class="flex flex-1 min-h-0 mx-px mt-px border border-[#b2b2b2] bg-white">
                    <textarea id="block" class="min-w-0 flex-1 resize-none pl-[14px] pt-1 font-['Liberation_Sans',sans-serif] text-[17px] leading-[20px] font-bold text-[#f00] outline-none">Hier können wichtige Hinweise zu diesem Kunden hinterlegt werden</textarea>
                    <div class="flex flex-col items-center justify-between w-[17px] bg-[#f0f0f0] py-[6px] text-[#c4c4c4]"><svg class="w-[7px] h-[5px]"><use href="#i-up"/></svg><svg class="w-[7px] h-[5px]"><use href="#i-down"/></svg></div>
                </div>
            </section>
        </div>
    </div>
</div>
</main>

<footer class="flex shrink-0 items-center h-[26px] bg-[#474747] pl-[7px] pr-1 text-white">
    <svg class="size-4 mr-[5px]"><use href="#i-people"/></svg>
    <span class="text-[13px] font-bold">Kunde Nr. 50044 Thiele Joachim, Züsch</span>
    <svg class="size-4 ml-auto mr-[5px]"><use href="#i-money"/></svg>
    <span>Offen: <b class="text-[13px]">9.842,32 €</b></span>
    <button type="button" class="flex items-center ml-[15px]">
        <svg class="size-[14px] mr-[6px]" viewBox="0 0 14 14"><path d="M0 0h14v14H0z" fill="#d8401c"/><path d="M3 3l8 8M11 3l-8 8" stroke="#fff" stroke-width="2.600"/></svg>
        Schließen
        <svg class="ml-1 w-[6px] h-[3px]"><use href="#i-caret"/></svg>
    </button>
    <svg class="ml-[13px] mt-2 size-[11px]" viewBox="0 0 11 11"><path d="M8 0h2v2H8zM4 4h2v2H4zM8 4h2v2H8zM0 8h2v2H0zM4 8h2v2H4zM8 8h2v2H8z" fill="#999"/></svg>
</footer>

<script>
  const kontakte = [
    ['Telefon', 'Herr Meyer', '06503/1234567'],
    ['Rechnung Mail', 'Frau Schmidt', 'buchhaltung@PlusFakt.de'],
    ['Einlagerungsanschreiben Mail', 'Frau Müller', 'fuhrpark@PlusFakt.de'],
  ];
  const termine = [
    ['18.02.2025', '9:00', '10:00', ''],
    ['21.01.2025', '11:30', '12:15', ''],
    ['16.01.2025', '10:45', '11:30', 'TR NT 66'],
    ['02.12.2024', '8:30', '9:30', ''],
    ['29.11.2024', '16:00', '17:30', 'Kunde holt Reifen ab'],
    ['28.11.2024', '16:15', '17:15', 'TestEinlagerung 2'],
    ['28.11.2024', '14:00', '15:00', 'Testeinagerung'],
  ];
  // true/false rows are drawn as tick boxes
  const merkmale = [
    ['Autohaus', 'Mercedes'],
    ['Kommunikation', 'Telefon'],
    ['Handelskunde', true],
    ['Automobil Club', ''],
    ['Angestellter', false],
    ['ebay', false],
    ['TopKunde', false],
  ];
  const arrow = '<svg class="mx-auto w-[10px] h-[9px]"><use href="#i-row"/></svg>';

  document.getElementById('kontakte').innerHTML = kontakte.map(([art, name, mail], i) => {
    const sel = i === 2;
    const bg = sel ? 'bg-[#dedede]' : '';
    return `<tr class="h-[20px]">
      <td class="border-r border-[#cfcfcf]">${sel ? arrow : ''}</td>
      <td class="border-r border-[#cfcfcf] pl-[6px] ${bg}">${art}</td>
      <td class="border-r border-[#cfcfcf] pl-[6px] ${bg}">${name}</td>
      <td class="pl-[6px]"><span class="flex items-center justify-between overflow-hidden">${mail}${sel ? '<svg class="w-[6px] h-[10px]" viewBox="0 0 6 10"><path d="M6 .5H.5v9H6M.5.5L6 6M.5 9.500L5 5" stroke="#3b82c4" fill="none"/></svg>' : ''}</span></td>
    </tr>`;
  }).join('');

  document.getElementById('termine').innerHTML = termine.map(([datum, von, bis, betreff], i) => {
    const bg = i === 0 ? 'bg-[#dedede]' : 'bg-white';
    return `<tr class="h-[21px]">
      <td class="border-r border-[#cfcfcf] bg-white">${i === 0 ? arrow : ''}</td>
      <td class="border-r border-b border-[#cfcfcf] bg-white pl-[6px]">${datum}</td>
      <td class="border-r border-b border-[#cfcfcf] pr-[9px] text-right ${bg}">${von}</td>
      <td class="border-r border-b border-[#cfcfcf] pr-[5px] text-right ${bg}">${bis}</td>
      <td class="border-r border-b border-[#cfcfcf] pl-[6px] ${bg}">${betreff}</td>
      <td class="border-r border-b border-[#cfcfcf] ${bg}"></td>
      <td class="border-b border-[#cfcfcf] pl-[6px] ${bg}">${datum}</td>
    </tr>`;
  }).join('');

  document.getElementById('merkmale').innerHTML = merkmale.map(([name, wert], i) => {
    let cell = wert;
    if (typeof wert === 'boolean') {
      cell = `<span class="relative mx-auto block size-4"><input type="checkbox" aria-label="${name}" ${wert ? 'checked' : ''} class="block size-4 appearance-none border border-[#b2b2b2] bg-white">${wert ? '<svg class="absolute left-[2px] top-[2px] size-3"><use href="#i-check"/></svg>' : ''}</span>`;
    } else if (i === 0) {
      cell = `<span class="relative block"><select aria-label="${name}" class="block w-full appearance-none"><option>${wert}</option></select><svg class="absolute right-0 top-[7px] w-[6px] h-[3px] text-[#666]"><use href="#i-caret"/></svg></span>`;
    }
    return `<tr class="h-[21px]">
      <td class="border-r border-b border-[#cfcfcf] pl-[6px] ${i === 0 ? 'bg-[#dedede]' : 'bg-[#f0f0f0]'}">${name}</td>
      <td class="border-b border-[#cfcfcf] px-[6px]">${cell}</td>
    </tr>`;
  }).join('');
</script>
</body>
</html>
